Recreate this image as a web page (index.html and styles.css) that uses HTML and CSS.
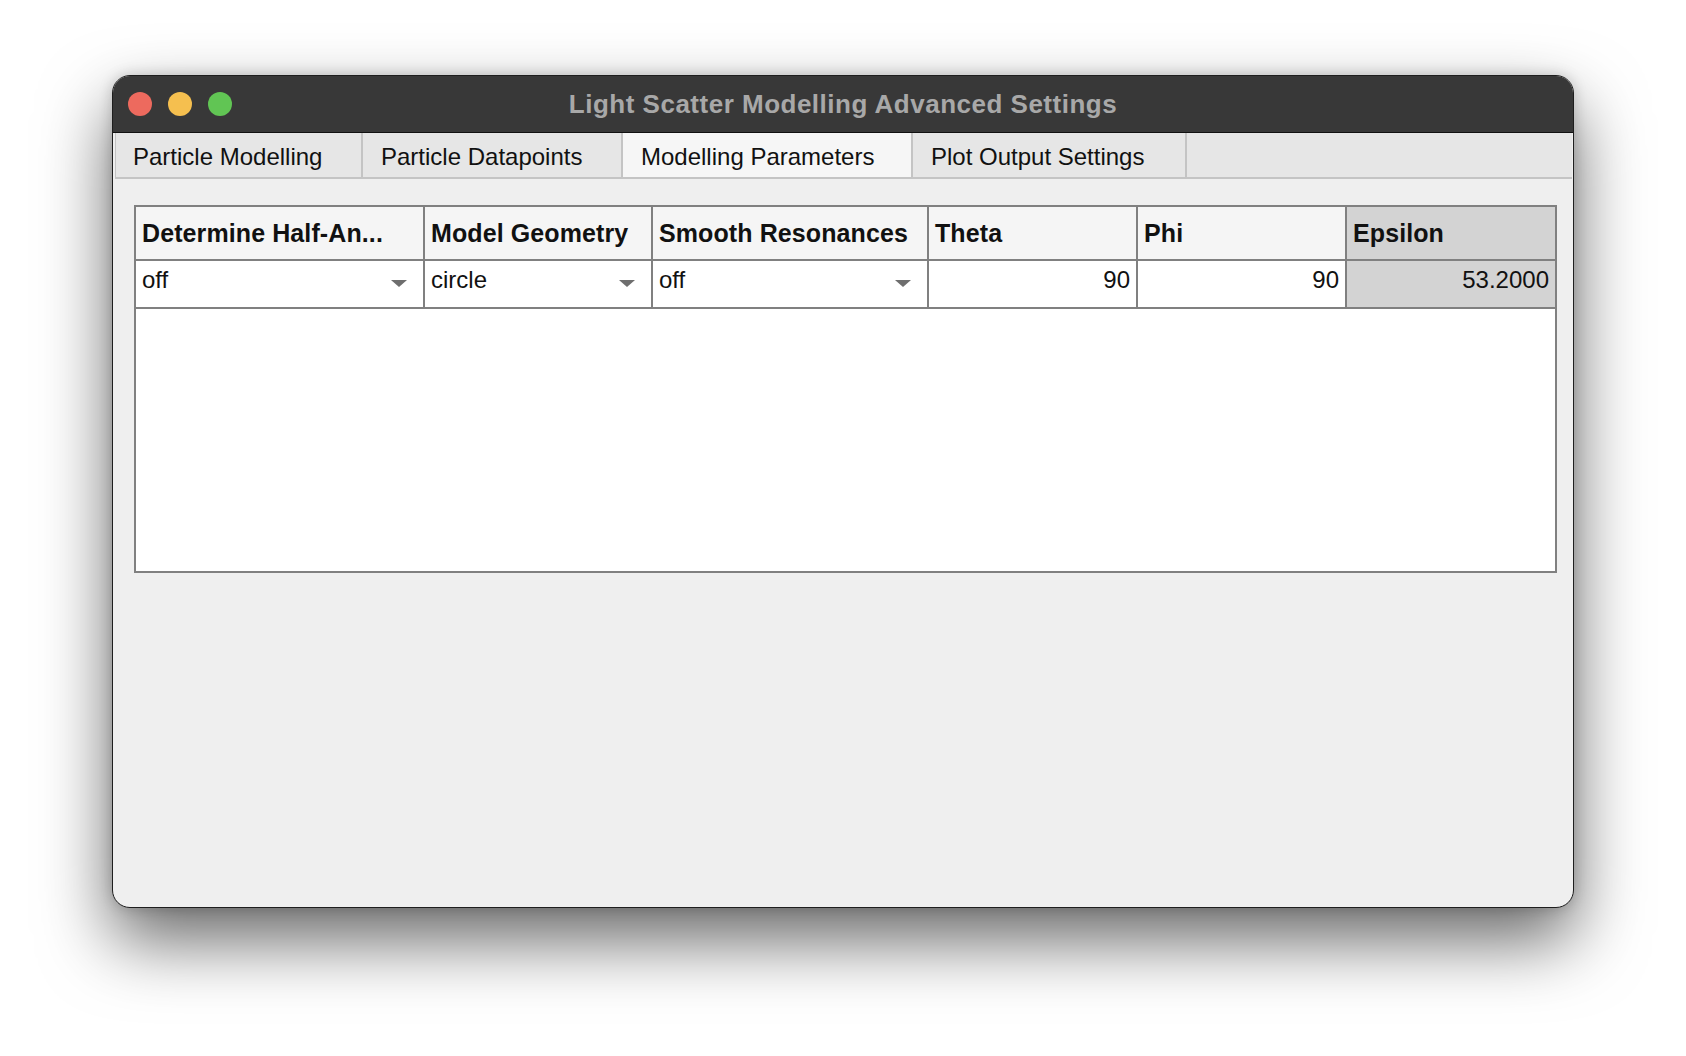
FILE: index.html
```html
<!DOCTYPE html>
<html>
<head>
<meta charset="utf-8">
<link rel="stylesheet" href="styles.css">
</head>
<body>
<div class="page">
<div class="window">
  <div class="titlebar">
    <div class="lights">
      <span class="light red"></span>
      <span class="light yellow"></span>
      <span class="light green"></span>
    </div>
    <div class="title">Light Scatter Modelling Advanced Settings</div>
    <div></div>
  </div>
  <div class="tabbar">
    <div class="tab t1">Particle Modelling</div>
    <div class="tab t2">Particle Datapoints</div>
    <div class="tab t3 selected">Modelling Parameters</div>
    <div class="tab t4">Plot Output Settings</div>
  </div>
  <div class="content">
    <div class="grid">
      <div class="hcell">Determine Half-An...</div>
      <div class="hcell">Model Geometry</div>
      <div class="hcell">Smooth Resonances</div>
      <div class="hcell">Theta</div>
      <div class="hcell">Phi</div>
      <div class="hcell last sel">Epsilon</div>
      <div class="dcell combo"><span>off</span><span class="arrow"></span></div>
      <div class="dcell combo"><span>circle</span><span class="arrow"></span></div>
      <div class="dcell combo"><span>off</span><span class="arrow"></span></div>
      <div class="dcell num">90</div>
      <div class="dcell num">90</div>
      <div class="dcell num last sel">53.2000</div>
    </div>
  </div>
</div>
</div>
</body>
</html>
```

FILE: styles.css
```css
html, body {
  margin: 0;
  padding: 0;
  background: #ffffff;
}
body {
  font-family: "Liberation Sans", Arial, sans-serif;
  color: #111;
}
.page {
  height: 1056px;
  padding-top: 75px;
  padding-left: 112px;
  box-sizing: border-box;
  overflow: hidden;
}
.window {
  width: 1462px;
  height: 833px;
  box-sizing: border-box;
  border: 1px solid #1e1e1e;
  border-radius: 18px;
  overflow: hidden;
  background: #efefef;
  box-shadow: 0 32px 70px rgba(0, 0, 0, 0.6), 0 0 14px rgba(0,0,0,0.18);
}
.titlebar {
  height: 56px;
  background: #383838;
  border-bottom: 1px solid #111;
  display: grid;
  grid-template-columns: 1fr auto 1fr;
  align-items: center;
}
.lights {
  display: flex;
  gap: 16px;
  padding-left: 15px;
}
.light {
  width: 24px;
  height: 24px;
  border-radius: 50%;
  display: block;
}
.red { background: #ed6a5e; }
.yellow { background: #f5bf4f; }
.green { background: #61c554; }
.title {
  color: #a8a8a8;
  font-weight: bold;
  font-size: 26px;
  letter-spacing: 0.5px;
}
.tabbar {
  margin-left: 2px;
  margin-right: 1px;
  height: 46px;
  box-sizing: border-box;
  background: #e6e6e6;
  border-bottom: 2px solid #c4c4c4;
  display: flex;
}
.tab {
  box-sizing: border-box;
  border-right: 2px solid #c4c4c4;
  padding-left: 17px;
  padding-top: 4px;
  font-size: 24px;
  display: flex;
  align-items: center;
  color: #111;
}
.t1 { width: 248px; border-left: 1px solid #c4c4c4; }
.t2 { width: 260px; padding-left: 18px; }
.t3 { width: 290px; padding-left: 18px; }
.t4 { width: 274px; padding-left: 18px; }
.tab.selected {
  background: #f6f6f6;
}
.content {
  padding-top: 26px;
  padding-left: 21px;
}
.grid {
  width: 1423px;
  height: 368px;
  box-sizing: border-box;
  border: 2px solid #808080;
  background: #ffffff;
  display: grid;
  grid-template-columns: 289px 228px 276px 209px 209px 208px;
  grid-template-rows: 54px 48px;
  align-content: start;
}
.hcell, .dcell {
  box-sizing: border-box;
  border-right: 2px solid #808080;
  border-bottom: 2px solid #808080;
  display: flex;
  align-items: center;
  padding: 0 6px;
  white-space: nowrap;
  overflow: hidden;
}
.hcell {
  background: #f5f5f5;
  font-weight: bold;
  font-size: 25px;
  letter-spacing: 0.1px;
}
.dcell {
  font-size: 24px;
  padding-bottom: 9px;
}
.last { border-right: none; }
.sel { background: #d3d3d3; }
.combo {
  justify-content: space-between;
  padding-right: 16px;
}
.num {
  justify-content: flex-end;
}
.arrow {
  width: 0;
  height: 0;
  border-left: 8px solid transparent;
  border-right: 8px solid transparent;
  border-top: 7px solid #6e6e6e;
  margin-top: 7px;
}
```
